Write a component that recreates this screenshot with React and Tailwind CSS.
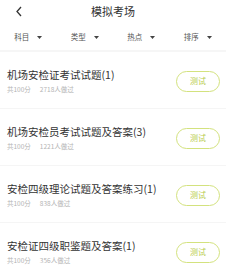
import React from "react";

const filters = ["科目", "类型", "热点", "排序"];

const exams = [
  { title: "机场安检证考试试题(1)", score: "共100分", count: "2718人做过" },
  { title: "机场安检员考试试题及答案(3)", score: "共100分", count: "1221人做过" },
  { title: "安检四级理论试题及答案练习(1)", score: "共100分", count: "838人做过" },
  { title: "安检证四级职鉴题及答案(1)", score: "共100分", count: "356人做过" },
];

const MockExam = () => {
  return (
    <div
      className="w-[226px] h-[268px] overflow-hidden bg-white"
      style={{ fontFamily: '"Noto Sans CJK SC", "Noto Sans", sans-serif' }}
    >
      {/* header */}
      <div className="relative h-[23px] flex items-center justify-center">
        <svg className="absolute left-[15px] top-[6px]" width="8" height="11" viewBox="0 0 8 11">
          <path d="M6 1 L2 5.5 L6 10" fill="none" stroke="#333" strokeWidth="1.3" />
        </svg>
        <span className="text-[11px] leading-none text-[#333]">模拟考场</span>
      </div>

      {/* filters */}
      <div className="grid grid-cols-4 h-[26px] items-center mt-[1px]">
        {filters.map((f) => (
          <div key={f} className="flex items-center justify-center gap-[8px]">
            <span className="text-[7.5px] leading-none text-[#555]">{f}</span>
            <svg width="5" height="3" viewBox="0 0 5 3">
              <path d="M0 0 L5 0 L2.5 3 Z" fill="#444" />
            </svg>
          </div>
        ))}
      </div>
      <div className="h-[2px] bg-[#f6f6f6]" />

      {/* list */}
      <div>
        {exams.map((e, i) => (
          <div key={i} className="h-[57px] flex items-center justify-between pl-[7px] pr-[6px] border-b border-[#f5f5f5]">
            <div className="flex flex-col gap-[6px] pt-[2px]">
              <span className="text-[10.5px] leading-none text-[#333]">{e.title}</span>
              <div className="flex gap-[9px] text-[6.5px] leading-none text-[#b4b4b4]">
                <span>{e.score}</span>
                <span>{e.count}</span>
              </div>
            </div>
            <div className="w-[44px] h-[21px] rounded-full border border-[#d3e27e] flex items-center justify-center mt-[2px]">
              <span className="text-[8px] leading-none text-[#b9cc4c]">测试</span>
            </div>
          </div>
        ))}
      </div>
    </div>
  );
};

export default MockExam;
